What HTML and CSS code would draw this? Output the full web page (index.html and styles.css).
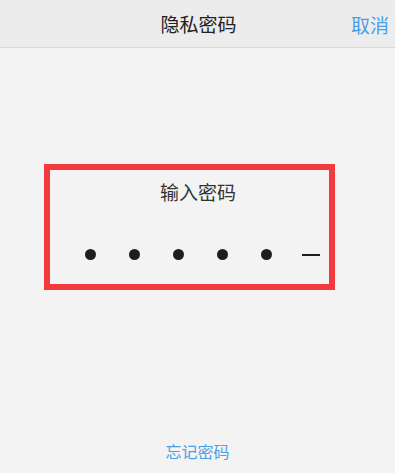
FILE: index.html
```html
<!DOCTYPE html>
<html>
<head>
  <meta charset="utf-8">
  <link rel="stylesheet" href="styles.css">
</head>
<body>
  <div class="nav">
    <span class="nav-title">隐私密码</span>
    <span class="nav-cancel">取消</span>
  </div>
  <div class="content">
    <div class="pin-box">
      <p class="pin-title">输入密码</p>
      <div class="pin-row">
        <span class="dot"></span>
        <span class="dot"></span>
        <span class="dot"></span>
        <span class="dot"></span>
        <span class="dot"></span>
        <span class="dash"></span>
      </div>
    </div>
    <p class="forgot">忘记密码</p>
  </div>
</body>
</html>
```

FILE: styles.css
```css
body {
  margin: 0;
  background: #f3f3f3;
  font-family: "Noto Sans CJK SC", "Noto Sans", sans-serif;
  width: 395px;
  height: 473px;
  overflow: hidden;
}

.nav {
  height: 47px;
  background: #ececec;
  border-bottom: 1px solid #d9d9d9;
  display: flex;
  align-items: center;
  justify-content: center;
  position: relative;
}

.nav-title {
  font-size: 19px;
  color: #222;
  padding-left: 2px;
}

.nav-cancel {
  position: absolute;
  right: 6px;
  top: 11px;
  font-size: 19px;
  color: #4a9fe6;
}

.content {
  display: flex;
  flex-direction: column;
  align-items: center;
}

.pin-box {
  margin-top: 116px;
  margin-left: -16px;
  width: 279px;
  height: 114px;
  border: 6px solid #f43a3d;
  display: flex;
  flex-direction: column;
  align-items: center;
}

.pin-title {
  margin: 9px 0 0;
  padding-left: 17px;
  font-size: 19px;
  line-height: 26px;
  color: #333;
}

.pin-row {
  align-self: stretch;
  margin-top: 44px;
  display: flex;
  align-items: center;
  gap: 33px;
  padding-left: 35px;
}

.dot {
  width: 11px;
  height: 11px;
  border-radius: 50%;
  background: #1e1e1e;
}

.dash {
  width: 18px;
  height: 2px;
  background: #1e1e1e;
  margin-left: -3px;
}

.forgot {
  margin: 149px 0 0;
  font-size: 16px;
  color: #4a9fe6;
}
```
